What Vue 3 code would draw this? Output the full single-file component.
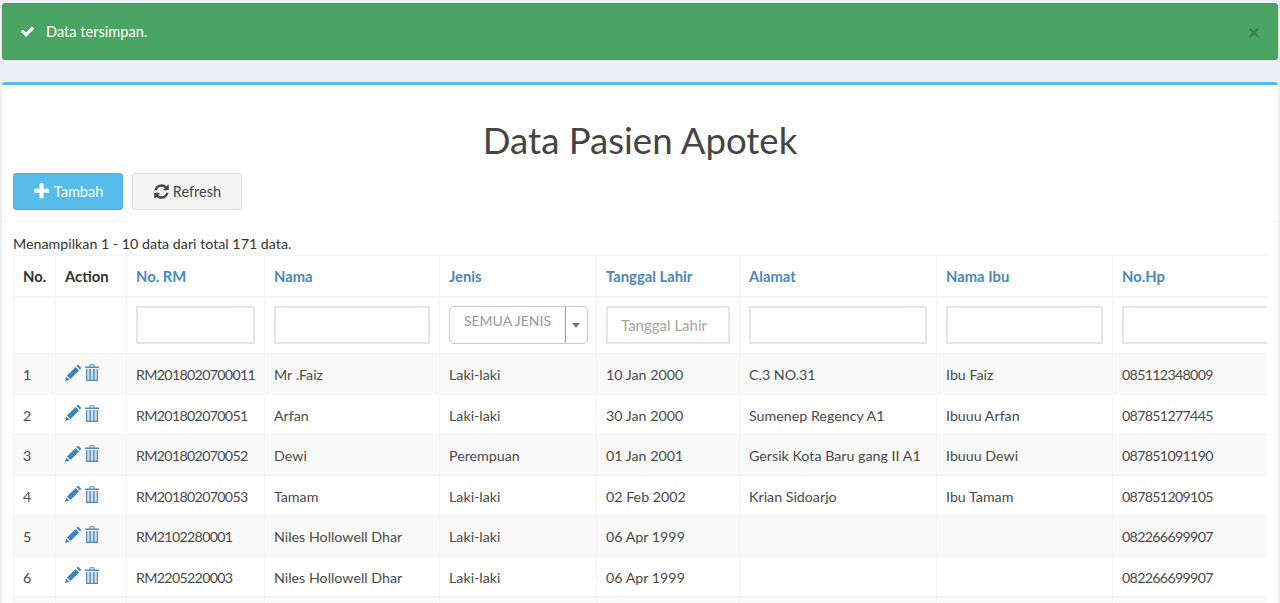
<script setup>
const columns = [
  { label: 'No.', width: 42 },
  { label: 'Action', width: 71 },
  { label: 'No. RM', width: 138, link: true },
  { label: 'Nama', width: 175, link: true },
  { label: 'Jenis', width: 157, link: true },
  { label: 'Tanggal Lahir', width: 143, link: true },
  { label: 'Alamat', width: 197, link: true },
  { label: 'Nama Ibu', width: 176, link: true },
  { label: 'No.Hp', width: 175, link: true }
];

const rows = [
  ['1', 'RM2018020700011', 'Mr .Faiz', 'Laki-laki', '10 Jan 2000', 'C.3 NO.31', 'Ibu Faiz', '085112348009'],
  ['2', 'RM201802070051', 'Arfan', 'Laki-laki', '30 Jan 2000', 'Sumenep Regency A1', 'Ibuuu Arfan', '087851277445'],
  ['3', 'RM201802070052', 'Dewi', 'Perempuan', '01 Jan 2001', 'Gersik Kota Baru gang II A1', 'Ibuuu Dewi', '087851091190'],
  ['4', 'RM201802070053', 'Tamam', 'Laki-laki', '02 Feb 2002', 'Krian Sidoarjo', 'Ibu Tamam', '087851209105'],
  ['5', 'RM2102280001', 'Niles Hollowell Dhar', 'Laki-laki', '06 Apr 1999', '', '', '082266699907'],
  ['6', 'RM2205220003', 'Niles Hollowell Dhar', 'Laki-laki', '06 Apr 1999', '', '', '082266699907']
];
</script>

<template>
  <div class="page">
    <div class="alert">
      <svg class="alert-check" viewBox="0 0 1792 1792"><path d="M1671 566q0 40-28 68l-724 724-136 136q-28 28-68 28t-68-28l-136-136-362-362q-28-28-28-68t28-68l136-136q28-28 68-28t68 28l294 295 656-657q28-28 68-28t68 28l136 136q28 28 28 68z" /></svg>
      <span class="alert-text">Data tersimpan.</span>
      <span class="alert-close">×</span>
    </div>

    <div class="box">
      <h1 class="title">Data Pasien Apotek</h1>
      <div class="toolbar">
        <button class="btn btn-info">
          <svg class="btn-icon plus" viewBox="0 0 1792 1792"><path d="M1600 736v192q0 40-28 68t-68 28h-416v416q0 40-28 68t-68 28h-192q-40 0-68-28t-28-68v-416h-416q-40 0-68-28t-28-68v-192q0-40 28-68t68-28h416v-416q0-40 28-68t68-28h192q40 0 68 28t28 68v416h416q40 0 68 28t28 68z" /></svg>
          Tambah
        </button>
        <button class="btn btn-default">
          <svg class="btn-icon" viewBox="0 0 1792 1792"><path d="M1639 1056q0 5-1 7-64 268-268 434.500t-478 166.500q-146 0-282.500-55t-243.500-157l-129 129q-19 19-45 19t-45-19-19-45v-448q0-26 19-45t45-19h448q26 0 45 19t19 45-19 45l-137 137q71 66 161 102t187 36q134 0 250-65t186-179q11-17 53-117 8-23 30-23h192q13 0 22.500 9.500t9.500 22.500zm25-800v448q0 26-19 45t-45 19h-448q-26 0-45-19t-19-45 19-45l138-138q-148-137-349-137-134 0-250 65t-186 179q-11 17-53 117-8 23-30 23h-199q-13 0-22.500-9.500t-9.500-22.500v-7q65-268 270-434.500t480-166.500q146 0 284 55.500t245 156.500l130-129q19-19 45-19t45 19 19 45z" /></svg>
          Refresh
        </button>
      </div>

      <div class="box-body">
        <div class="summary">Menampilkan 1 - 10 data dari total 171 data.</div>
        <div class="grid-wrap">
          <table class="grid">
            <colgroup>
              <col v-for="col in columns" :key="col.label" :style="{ width: col.width + 'px' }" />
            </colgroup>
            <thead>
              <tr class="head-row">
                <th v-for="col in columns" :key="col.label" :class="{ link: col.link }">{{ col.label }}</th>
              </tr>
              <tr class="filter-row">
                <td></td>
                <td></td>
                <td><input class="field" type="text" /></td>
                <td><input class="field" type="text" /></td>
                <td>
                  <div class="select">
                    <span class="select-label">SEMUA JENIS</span>
                    <span class="select-arrow"></span>
                  </div>
                </td>
                <td><input class="field" type="text" placeholder="Tanggal Lahir" /></td>
                <td><input class="field" type="text" /></td>
                <td><input class="field" type="text" /></td>
                <td><input class="field" type="text" /></td>
              </tr>
            </thead>
            <tbody>
              <tr v-for="row in rows" :key="row[0]" class="data-row">
                <td>{{ row[0] }}</td>
                <td>
                  <div class="actions">
                    <svg class="icon-pencil" viewBox="0 0 16 16"><path d="M0 16l1.200-4.600 3.400 3.400zM2 10.500l8.600-8.600 3.500 3.500-8.600 8.600zM11.400 1.100l1-1q.5-.4 1 0l2.500 2.500q.4.5 0 1l-1 1z" /></svg>
                    <svg class="icon-trash" viewBox="0 0 14 17"><path d="M0 2.500h14V4H0zM4.500 2.500V1Q4.500.2 5.300.2h3.400q.8 0 .8.8v1.500h-1V1.200h-3v1.300z" /><path opacity=".25" d="M1 5h12v12H1z" /><path d="M1 5h1.200v12H1zM4.400 5h1.400v12H4.400zM8.200 5h1.400v12H8.200zM11.800 5H13v12h-1.200zM1 15.800h12V17H1z" /></svg>
                  </div>
                </td>
                <td class="num-rm">{{ row[1] }}</td>
                <td>{{ row[2] }}</td>
                <td>{{ row[3] }}</td>
                <td>{{ row[4] }}</td>
                <td>{{ row[5] }}</td>
                <td>{{ row[6] }}</td>
                <td class="num-hp">{{ row[7] }}</td>
              </tr>
              <tr class="data-row">
                <td v-for="col in columns" :key="col.label"></td>
              </tr>
            </tbody>
          </table>
        </div>
      </div>
    </div>
  </div>
</template>

<style>
html,
body {
  margin: 0;
  height: 100%;
  overflow: hidden;
  background: #ecf0f5;
}
</style>

<style scoped>
.page {
  height: 603px;
  overflow: hidden;
  padding: 3px 2px 0;
  box-sizing: border-box;
  font-family: "Lato", "Open Sans", sans-serif;
  font-size: 14.25px;
  color: #333;
}

.alert {
  display: flex;
  align-items: center;
  height: 57px;
  box-sizing: border-box;
  padding: 0 15px 0 17px;
  background: #4aa564;
  border: 1px solid #46995c;
  border-radius: 3px;
  color: #fff;
  font-size: 14.6px;
}

.alert-check {
  width: 15px;
  height: 15px;
  fill: #fff;
  margin-right: 11px;
}

.alert-text {
  flex: 1;
}

.alert-close {
  font-size: 21px;
  font-weight: bold;
  line-height: 1;
  color: #000;
  opacity: 0.25;
  margin-right: 2px;
}

.box {
  margin-top: 22px;
  background: #fff;
  border-top: 3px solid #55bcec;
  border-radius: 3px;
}

.title {
  margin: 0;
  padding-top: 33px;
  height: 88px;
  box-sizing: border-box;
  text-align: center;
  font-size: 36.6px;
  font-weight: 400;
  line-height: 44px;
  color: #444;
}

.toolbar {
  display: flex;
  gap: 9px;
  padding: 0 11px 11px;
  border-bottom: 1px solid #f4f4f4;
}

.btn {
  display: flex;
  align-items: center;
  justify-content: center;
  gap: 3px;
  width: 110px;
  height: 37px;
  padding: 0 0 1px;
  box-sizing: border-box;
  border-radius: 3px;
  font: inherit;
  font-size: 14.5px;
}

.btn-info {
  background: #55bcec;
  border: 1px solid #4fb3e2;
  color: #fff;
}

.btn-default {
  background: #f4f4f4;
  border: 1px solid #ddd;
  color: #444;
}

.btn-icon {
  width: 17px;
  height: 17px;
  fill: currentColor;
}

.btn-icon.plus {
  width: 19px;
  height: 19px;
  margin-left: -1px;
}

.box-body {
  padding: 13px 0 0 11px;
}

.summary {
  height: 20px;
  line-height: 17px;
}

.grid-wrap {
  width: 1254px;
  overflow: hidden;
}

.grid {
  table-layout: fixed;
  width: 1274px;
  border-collapse: collapse;
  border-top: 1px solid #f4f4f4;
}

.grid th,
.grid td {
  padding: 0 9px;
  border-left: 1px solid #f4f4f4;
  text-align: left;
  white-space: nowrap;
  overflow: hidden;
}

.head-row {
  height: 41px;
  border-bottom: 2px solid #f4f4f4;
}

.head-row th {
  font-size: 14.8px;
  font-weight: 700;
  color: #333;
}

.head-row th.link {
  color: #4a89bb;
}

.filter-row {
  height: 57px;
}

.field {
  display: block;
  width: 100%;
  height: 38px;
  box-sizing: border-box;
  padding: 0 13px;
  border: 2px solid #e3e4ec;
  background: #fff;
  font: inherit;
  font-size: 15px;
  outline: none;
}

.field::placeholder {
  color: #a5a5a5;
}

.select {
  display: flex;
  height: 38px;
  margin-right: -1px;
  box-sizing: border-box;
  border: 1px solid #c9c9c9;
  border-radius: 5px;
}

.select-label {
  flex: 1;
  padding-top: 5px;
  text-align: center;
  color: #999;
  font-size: 14px;
}

.select-arrow {
  position: relative;
  width: 21px;
  border-left: 1px solid #999;
}

.select-arrow::after {
  content: "";
  position: absolute;
  left: 6px;
  top: 16px;
  border-left: 4px solid transparent;
  border-right: 4px solid transparent;
  border-top: 5px solid #777;
}

.data-row {
  height: 40.5px;
  border-top: 1px solid #f4f4f4;
}

.data-row:nth-child(odd) {
  background: #f9f9f9;
}

.data-row td {
  padding-top: 2px;
  color: #4a4a4a;
}

.data-row td.num-rm {
  letter-spacing: -0.7px;
}

.data-row td.num-hp {
  letter-spacing: -0.7px;
}

.actions {
  display: flex;
  align-items: center;
  gap: 4px;
  margin-top: -4px;
}

.icon-pencil {
  width: 16px;
  height: 16px;
  fill: #3c85c0;
}

.icon-trash {
  width: 14px;
  height: 17px;
  fill: #4f8dc0;
}
</style>
